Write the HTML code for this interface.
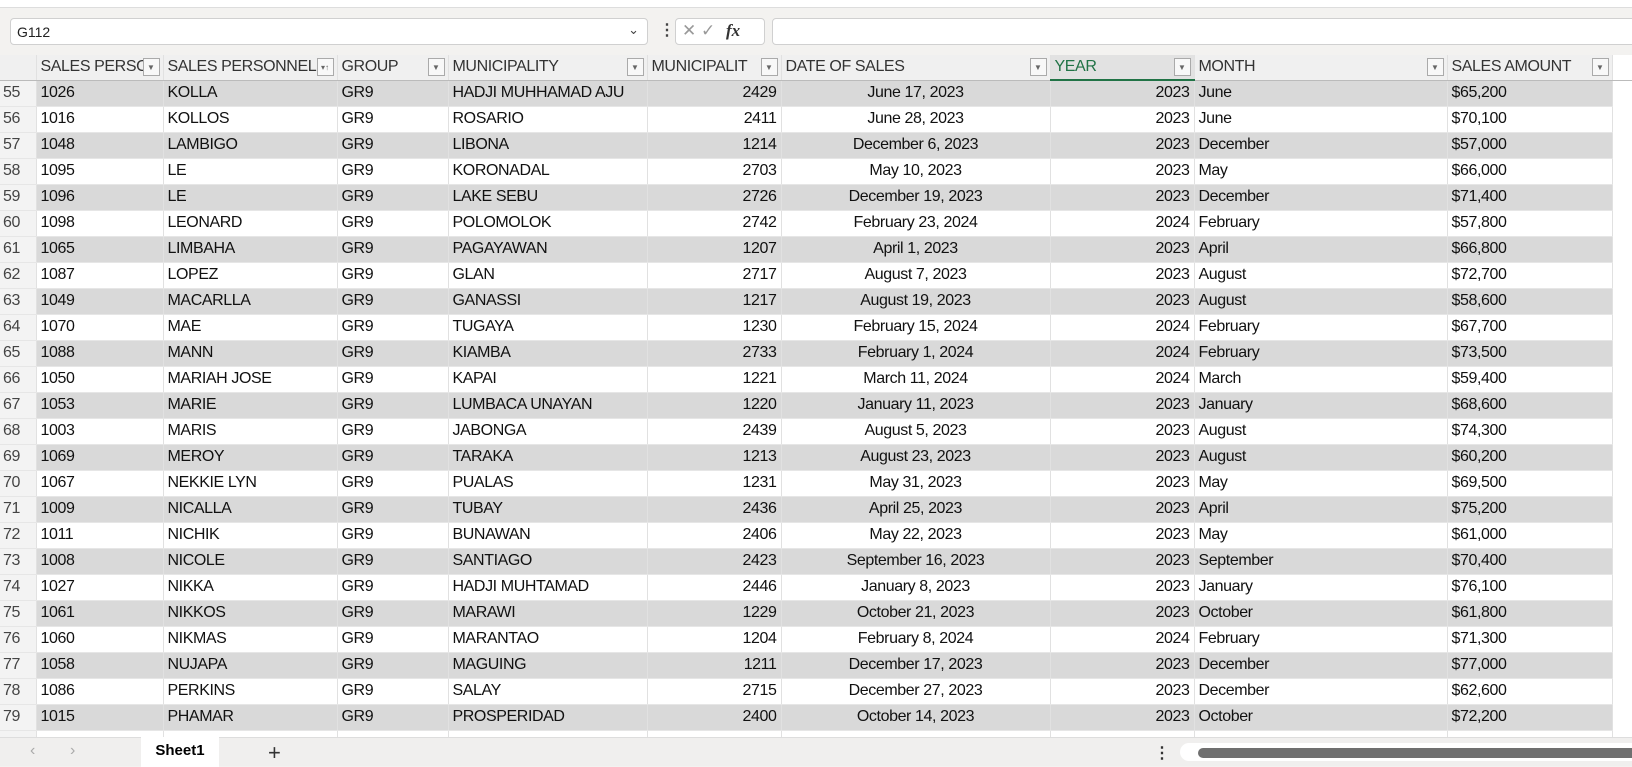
<!DOCTYPE html>
<html><head><meta charset="utf-8"><style>
*{margin:0;padding:0;box-sizing:border-box}
body{width:1632px;height:766px;overflow:hidden;background:#f3f2f0;font-family:"Liberation Sans",sans-serif;position:relative}
.top{position:absolute;left:0;top:0;width:1632px;height:8px;background:#fff;border-bottom:1px solid #ddd}
.nb{position:absolute;left:10px;top:18px;width:638px;height:27px;background:#fff;border:1px solid #d0d0d0;border-radius:4px;font-size:14px;padding:5px 6px;color:#222}
.nb .ch{position:absolute;right:8px;top:3px;font-size:13px;color:#444}
.dots{position:absolute;left:659px;top:20px;font-size:16px;color:#444;font-weight:bold}
.fxb{position:absolute;left:675px;top:18px;width:90px;height:27px;background:#fff;border:1px solid #d0d0d0;border-radius:4px;font-size:17px;color:#999;padding:2px 6px}
.fxb i{font-family:"Liberation Serif",serif;color:#333;font-weight:bold;margin-left:6px}
.fb{position:absolute;left:772px;top:18px;width:870px;height:27px;background:#fff;border:1px solid #d0d0d0;border-radius:4px}
table{position:absolute;left:0;top:55px;width:1632px;border-collapse:collapse;table-layout:fixed;font-size:16px;letter-spacing:-0.4px;color:#111}
td{height:26px;border-right:1px solid #e1e1e1;border-bottom:1px solid #e6e6e6;padding:0 4px;white-space:nowrap;overflow:hidden;background:#fff}
tr.h td{height:25px;background:#f0f0f0;color:#333;border-bottom:1px solid #bbb;position:relative;padding-right:22px}
tr.h td span.f{position:absolute;right:3px;top:3px;width:17px;height:18px;border:1px solid #aaa;background:#f8f8f8;font-size:8px;color:#666;text-align:center;line-height:17px;letter-spacing:0}
tr.g td{background:#d9d9d9}
td.n{background:#f3f3f3!important;color:#444;padding:0 3px}
td.r{text-align:right}td.c{text-align:center}
td.e{background:#fff!important;border:none}
.tabs{position:absolute;left:0;top:737px;width:1632px;height:29px;background:#f0efee;border-top:1px solid #ddd}
.sheet{position:absolute;left:141px;top:-1px;width:78px;height:30px;background:#fff;font-weight:bold;font-size:15px;text-align:center;line-height:28px}
.arr{position:absolute;top:4px;font-size:16px;color:#aaa}
.plus{position:absolute;left:268px;top:2px;font-size:22px;color:#333}
.sb{position:absolute;left:1180px;top:5px;width:460px;height:18px;border-radius:9px;background:#fff}
.sbt{position:absolute;left:1198px;top:10px;width:440px;height:10px;border-radius:5px;background:#6f6f6f}
.vd{position:absolute;left:1154px;top:5px;font-size:16px;font-weight:bold;color:#333}
</style></head><body>
<div class="top"></div>
<div class="nb">G112<span class="ch">&#8964;</span></div>
<div class="dots">&#8942;</div>
<div class="fxb">&#10005; &#10003; <i>fx</i></div>
<div class="fb"></div>
<table>
<colgroup><col style="width:36px"><col style="width:127px"><col style="width:174px"><col style="width:111px"><col style="width:199px"><col style="width:134px"><col style="width:269px"><col style="width:144px"><col style="width:253px"><col style="width:165px"><col style="width:20px"></colgroup>
<tr class="h"><td class="n" style="background:#f0f0f0!important"></td><td>SALES PERSO<span class="f">▼</span></td><td>SALES PERSONNEL<span class="f">▾↑</span></td><td>GROUP<span class="f">▼</span></td><td>MUNICIPALITY<span class="f">▼</span></td><td>MUNICIPALIT<span class="f">▼</span></td><td>DATE OF SALES<span class="f">▼</span></td><td style="background:#e2e2e2;color:#217346;border-bottom:2px solid #217346">YEAR<span class="f">▼</span></td><td>MONTH<span class="f">▼</span></td><td>SALES AMOUNT<span class="f">▼</span></td><td class="e"></td></tr>
<tr class="g"><td class="n">55</td><td>1026</td><td>KOLLA</td><td>GR9</td><td>HADJI MUHHAMAD AJU</td><td class="r">2429</td><td class="c">June 17, 2023</td><td class="r">2023</td><td>June</td><td>$65,200</td><td class="e"></td></tr>
<tr><td class="n">56</td><td>1016</td><td>KOLLOS</td><td>GR9</td><td>ROSARIO</td><td class="r">2411</td><td class="c">June 28, 2023</td><td class="r">2023</td><td>June</td><td>$70,100</td><td class="e"></td></tr>
<tr class="g"><td class="n">57</td><td>1048</td><td>LAMBIGO</td><td>GR9</td><td>LIBONA</td><td class="r">1214</td><td class="c">December 6, 2023</td><td class="r">2023</td><td>December</td><td>$57,000</td><td class="e"></td></tr>
<tr><td class="n">58</td><td>1095</td><td>LE</td><td>GR9</td><td>KORONADAL</td><td class="r">2703</td><td class="c">May 10, 2023</td><td class="r">2023</td><td>May</td><td>$66,000</td><td class="e"></td></tr>
<tr class="g"><td class="n">59</td><td>1096</td><td>LE</td><td>GR9</td><td>LAKE SEBU</td><td class="r">2726</td><td class="c">December 19, 2023</td><td class="r">2023</td><td>December</td><td>$71,400</td><td class="e"></td></tr>
<tr><td class="n">60</td><td>1098</td><td>LEONARD</td><td>GR9</td><td>POLOMOLOK</td><td class="r">2742</td><td class="c">February 23, 2024</td><td class="r">2024</td><td>February</td><td>$57,800</td><td class="e"></td></tr>
<tr class="g"><td class="n">61</td><td>1065</td><td>LIMBAHA</td><td>GR9</td><td>PAGAYAWAN</td><td class="r">1207</td><td class="c">April 1, 2023</td><td class="r">2023</td><td>April</td><td>$66,800</td><td class="e"></td></tr>
<tr><td class="n">62</td><td>1087</td><td>LOPEZ</td><td>GR9</td><td>GLAN</td><td class="r">2717</td><td class="c">August 7, 2023</td><td class="r">2023</td><td>August</td><td>$72,700</td><td class="e"></td></tr>
<tr class="g"><td class="n">63</td><td>1049</td><td>MACARLLA</td><td>GR9</td><td>GANASSI</td><td class="r">1217</td><td class="c">August 19, 2023</td><td class="r">2023</td><td>August</td><td>$58,600</td><td class="e"></td></tr>
<tr><td class="n">64</td><td>1070</td><td>MAE</td><td>GR9</td><td>TUGAYA</td><td class="r">1230</td><td class="c">February 15, 2024</td><td class="r">2024</td><td>February</td><td>$67,700</td><td class="e"></td></tr>
<tr class="g"><td class="n">65</td><td>1088</td><td>MANN</td><td>GR9</td><td>KIAMBA</td><td class="r">2733</td><td class="c">February 1, 2024</td><td class="r">2024</td><td>February</td><td>$73,500</td><td class="e"></td></tr>
<tr><td class="n">66</td><td>1050</td><td>MARIAH JOSE</td><td>GR9</td><td>KAPAI</td><td class="r">1221</td><td class="c">March 11, 2024</td><td class="r">2024</td><td>March</td><td>$59,400</td><td class="e"></td></tr>
<tr class="g"><td class="n">67</td><td>1053</td><td>MARIE</td><td>GR9</td><td>LUMBACA UNAYAN</td><td class="r">1220</td><td class="c">January 11, 2023</td><td class="r">2023</td><td>January</td><td>$68,600</td><td class="e"></td></tr>
<tr><td class="n">68</td><td>1003</td><td>MARIS</td><td>GR9</td><td>JABONGA</td><td class="r">2439</td><td class="c">August 5, 2023</td><td class="r">2023</td><td>August</td><td>$74,300</td><td class="e"></td></tr>
<tr class="g"><td class="n">69</td><td>1069</td><td>MEROY</td><td>GR9</td><td>TARAKA</td><td class="r">1213</td><td class="c">August 23, 2023</td><td class="r">2023</td><td>August</td><td>$60,200</td><td class="e"></td></tr>
<tr><td class="n">70</td><td>1067</td><td>NEKKIE LYN</td><td>GR9</td><td>PUALAS</td><td class="r">1231</td><td class="c">May 31, 2023</td><td class="r">2023</td><td>May</td><td>$69,500</td><td class="e"></td></tr>
<tr class="g"><td class="n">71</td><td>1009</td><td>NICALLA</td><td>GR9</td><td>TUBAY</td><td class="r">2436</td><td class="c">April 25, 2023</td><td class="r">2023</td><td>April</td><td>$75,200</td><td class="e"></td></tr>
<tr><td class="n">72</td><td>1011</td><td>NICHIK</td><td>GR9</td><td>BUNAWAN</td><td class="r">2406</td><td class="c">May 22, 2023</td><td class="r">2023</td><td>May</td><td>$61,000</td><td class="e"></td></tr>
<tr class="g"><td class="n">73</td><td>1008</td><td>NICOLE</td><td>GR9</td><td>SANTIAGO</td><td class="r">2423</td><td class="c">September 16, 2023</td><td class="r">2023</td><td>September</td><td>$70,400</td><td class="e"></td></tr>
<tr><td class="n">74</td><td>1027</td><td>NIKKA</td><td>GR9</td><td>HADJI MUHTAMAD</td><td class="r">2446</td><td class="c">January 8, 2023</td><td class="r">2023</td><td>January</td><td>$76,100</td><td class="e"></td></tr>
<tr class="g"><td class="n">75</td><td>1061</td><td>NIKKOS</td><td>GR9</td><td>MARAWI</td><td class="r">1229</td><td class="c">October 21, 2023</td><td class="r">2023</td><td>October</td><td>$61,800</td><td class="e"></td></tr>
<tr><td class="n">76</td><td>1060</td><td>NIKMAS</td><td>GR9</td><td>MARANTAO</td><td class="r">1204</td><td class="c">February 8, 2024</td><td class="r">2024</td><td>February</td><td>$71,300</td><td class="e"></td></tr>
<tr class="g"><td class="n">77</td><td>1058</td><td>NUJAPA</td><td>GR9</td><td>MAGUING</td><td class="r">1211</td><td class="c">December 17, 2023</td><td class="r">2023</td><td>December</td><td>$77,000</td><td class="e"></td></tr>
<tr><td class="n">78</td><td>1086</td><td>PERKINS</td><td>GR9</td><td>SALAY</td><td class="r">2715</td><td class="c">December 27, 2023</td><td class="r">2023</td><td>December</td><td>$62,600</td><td class="e"></td></tr>
<tr class="g"><td class="n">79</td><td>1015</td><td>PHAMAR</td><td>GR9</td><td>PROSPERIDAD</td><td class="r">2400</td><td class="c">October 14, 2023</td><td class="r">2023</td><td>October</td><td>$72,200</td><td class="e"></td></tr>
<tr><td class="n"></td><td></td><td></td><td></td><td></td><td></td><td></td><td></td><td></td><td></td><td class="e"></td></tr>
</table>
<div class="tabs">
<span class="arr" style="left:30px">&#8249;</span><span class="arr" style="left:70px">&#8250;</span>
<div class="sheet">Sheet1</div>
<span class="plus">+</span>
<span class="vd">&#8942;</span>
<div class="sb"></div><div class="sbt"></div>
</div>
</body></html>
